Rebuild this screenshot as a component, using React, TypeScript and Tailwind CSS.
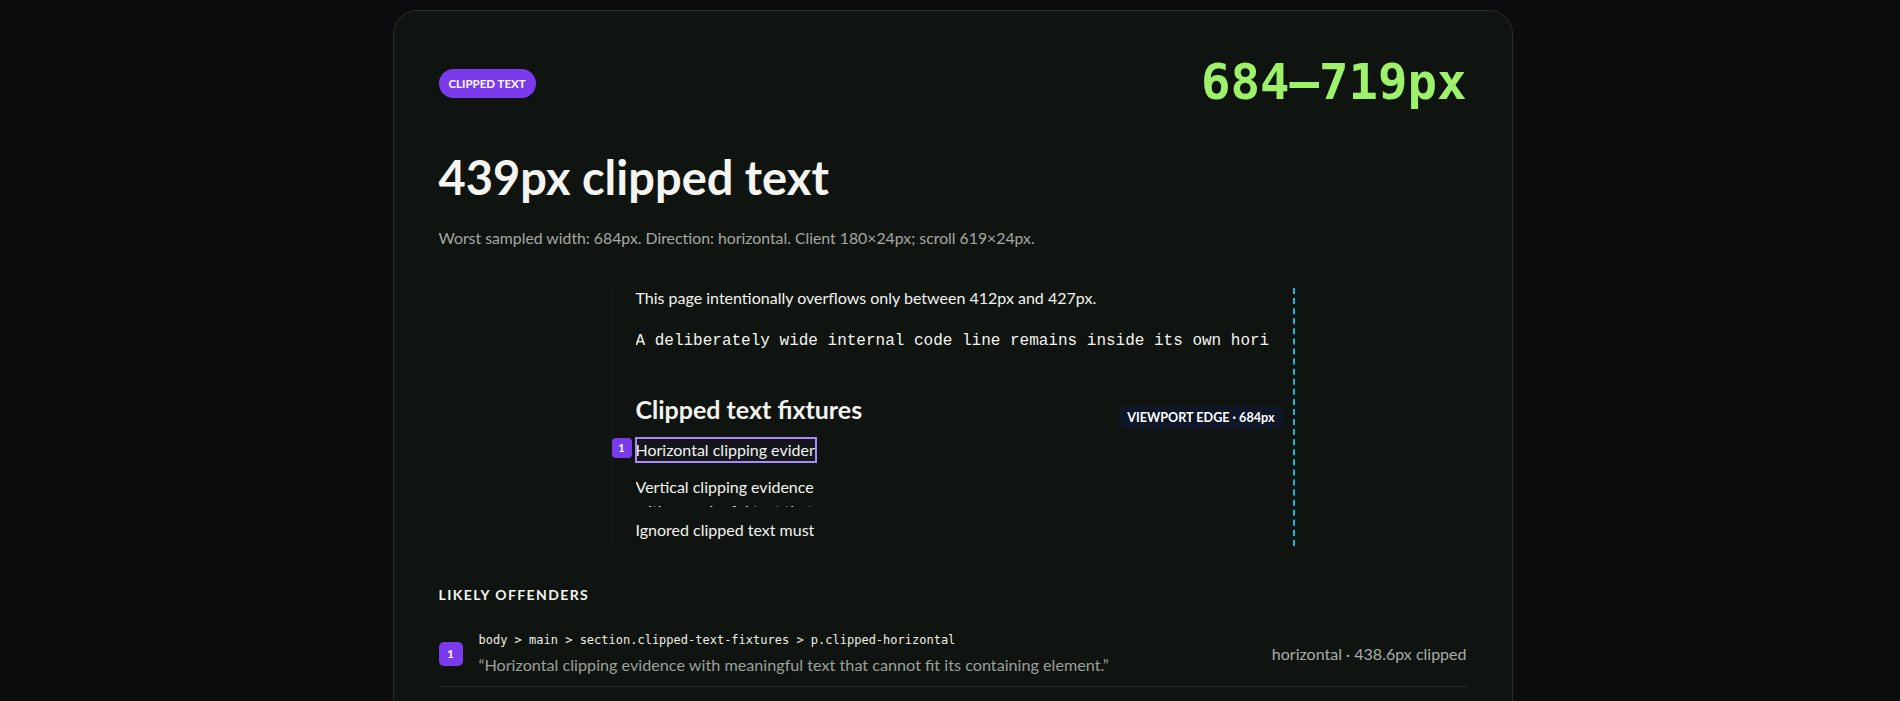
const sans = "font-['Segoe_UI',Lato,'Noto_Sans',sans-serif]";

type Offender = {
  selector: string;
  text: string;
  detail: string;
};

const offenders: Offender[] = [
  {
    selector: "body > main > section.clipped-text-fixtures > p.clipped-horizontal",
    text: "“Horizontal clipping evidence with meaningful text that cannot fit its containing element.”",
    detail: "horizontal · 438.6px clipped",
  },
];

function Preview() {
  return (
    <div className="flex justify-center mt-[27px]">
      <div className="relative w-[684px] rounded-xl border border-[#161a17] px-6 pt-2 pb-[14px] text-[#f2f3ee]">
        <p className="text-[16px] leading-6">
          This page intentionally overflows only between 412px and 427px.
        </p>
        <pre className="mt-[19px] overflow-hidden whitespace-pre font-['Liberation_Mono',monospace] text-[16px] leading-6">
          A deliberately wide internal code line remains inside its own horizontal scroll container.
        </pre>
        <h2 className="mt-[40px] text-[25px] font-bold leading-8">Clipped text fixtures</h2>
        <div className="relative mt-[13px]">
          <span className="absolute -left-[24px] top-0 flex h-5 w-5 items-center justify-center rounded-[4px] bg-[#7c3aed] text-[11px] font-bold text-white">
            1
          </span>
          <p className="h-6 w-[180px] overflow-hidden whitespace-nowrap bg-[#15161c] text-[16px] leading-6 outline-2 -outline-offset-1 outline-[#a78bfa]">
            Horizontal clipping evidence with meaningful text that cannot fit its containing element.
          </p>
        </div>
        <p className="mt-[13px] h-[32px] w-[180px] overflow-hidden text-[16px] leading-6">
          Vertical clipping evidence with meaningful text that cannot fit its containing element.
        </p>
        <p className="mt-[11px] h-6 w-[180px] overflow-hidden whitespace-nowrap text-[16px] leading-6">
          Ignored clipped text must not be reported as an offender.
        </p>

        <div className="absolute right-[11px] top-[128px] rounded-md bg-[#0e1628] px-[8px] py-[4px] text-[12.6px] font-bold leading-[15px] text-white">
          VIEWPORT EDGE · 684px
        </div>
        <div className="absolute -right-px top-2.5 bottom-2.5 border-r-2 border-dashed border-[#1fb3d6]" />
      </div>
    </div>
  );
}

export default function App() {
  return (
    <div className={`min-h-screen bg-[#0b0c0e] pt-[10px] pl-[5px] ${sans}`}>
      <div className="mx-auto w-[1120px] rounded-3xl border border-[#2a2e2b] bg-[#101411] px-[45px] pt-12 pb-12">
        <div className="flex items-center justify-between">
          <span className="rounded-full bg-[#7c3aed] px-[10px] py-[7px] text-[11.5px] font-bold leading-[15px] text-white">
            CLIPPED TEXT
          </span>
          <span className="font-['DejaVu_Sans_Mono',monospace] text-[49px] font-bold leading-[48px] text-[#9ef26a]">
            684–719px
          </span>
        </div>

        <h1 className="mt-[44px] text-[47px] font-bold leading-[53px] text-[#f4f5f0]">
          439px clipped text
        </h1>
        <p className="mt-[22px] text-[15.8px] leading-6 text-[#a4a8a2]">
          Worst sampled width: 684px. Direction: horizontal. Client 180×24px; scroll 619×24px.
        </p>

        <Preview />

        <h3 className="mt-[28px] text-[14px] font-bold uppercase leading-5 tracking-widest text-[#f4f5f0]">
          Likely offenders
        </h3>
        <ul className="mt-[26px]">
          {offenders.map((o, i) => (
            <li key={i} className="flex items-center justify-between border-b border-[#262a26] pb-[10px]">
              <div className="flex items-center gap-4">
                <span className="flex h-6 w-6 items-center justify-center rounded-[5px] bg-[#7c3aed] text-[12px] font-bold text-white">
                  {i + 1}
                </span>
                <div>
                  <div className="font-['DejaVu_Sans_Mono',monospace] text-[12px] leading-[18px] text-[#eceee4]">
                    {o.selector}
                  </div>
                  <div className="mt-[5px] text-[16.2px] leading-[22px] text-[#9aa09a]">{o.text}</div>
                </div>
              </div>
              <span className="text-[16px] text-[#a8aca6]">{o.detail}</span>
            </li>
          ))}
        </ul>
      </div>
    </div>
  );
}
